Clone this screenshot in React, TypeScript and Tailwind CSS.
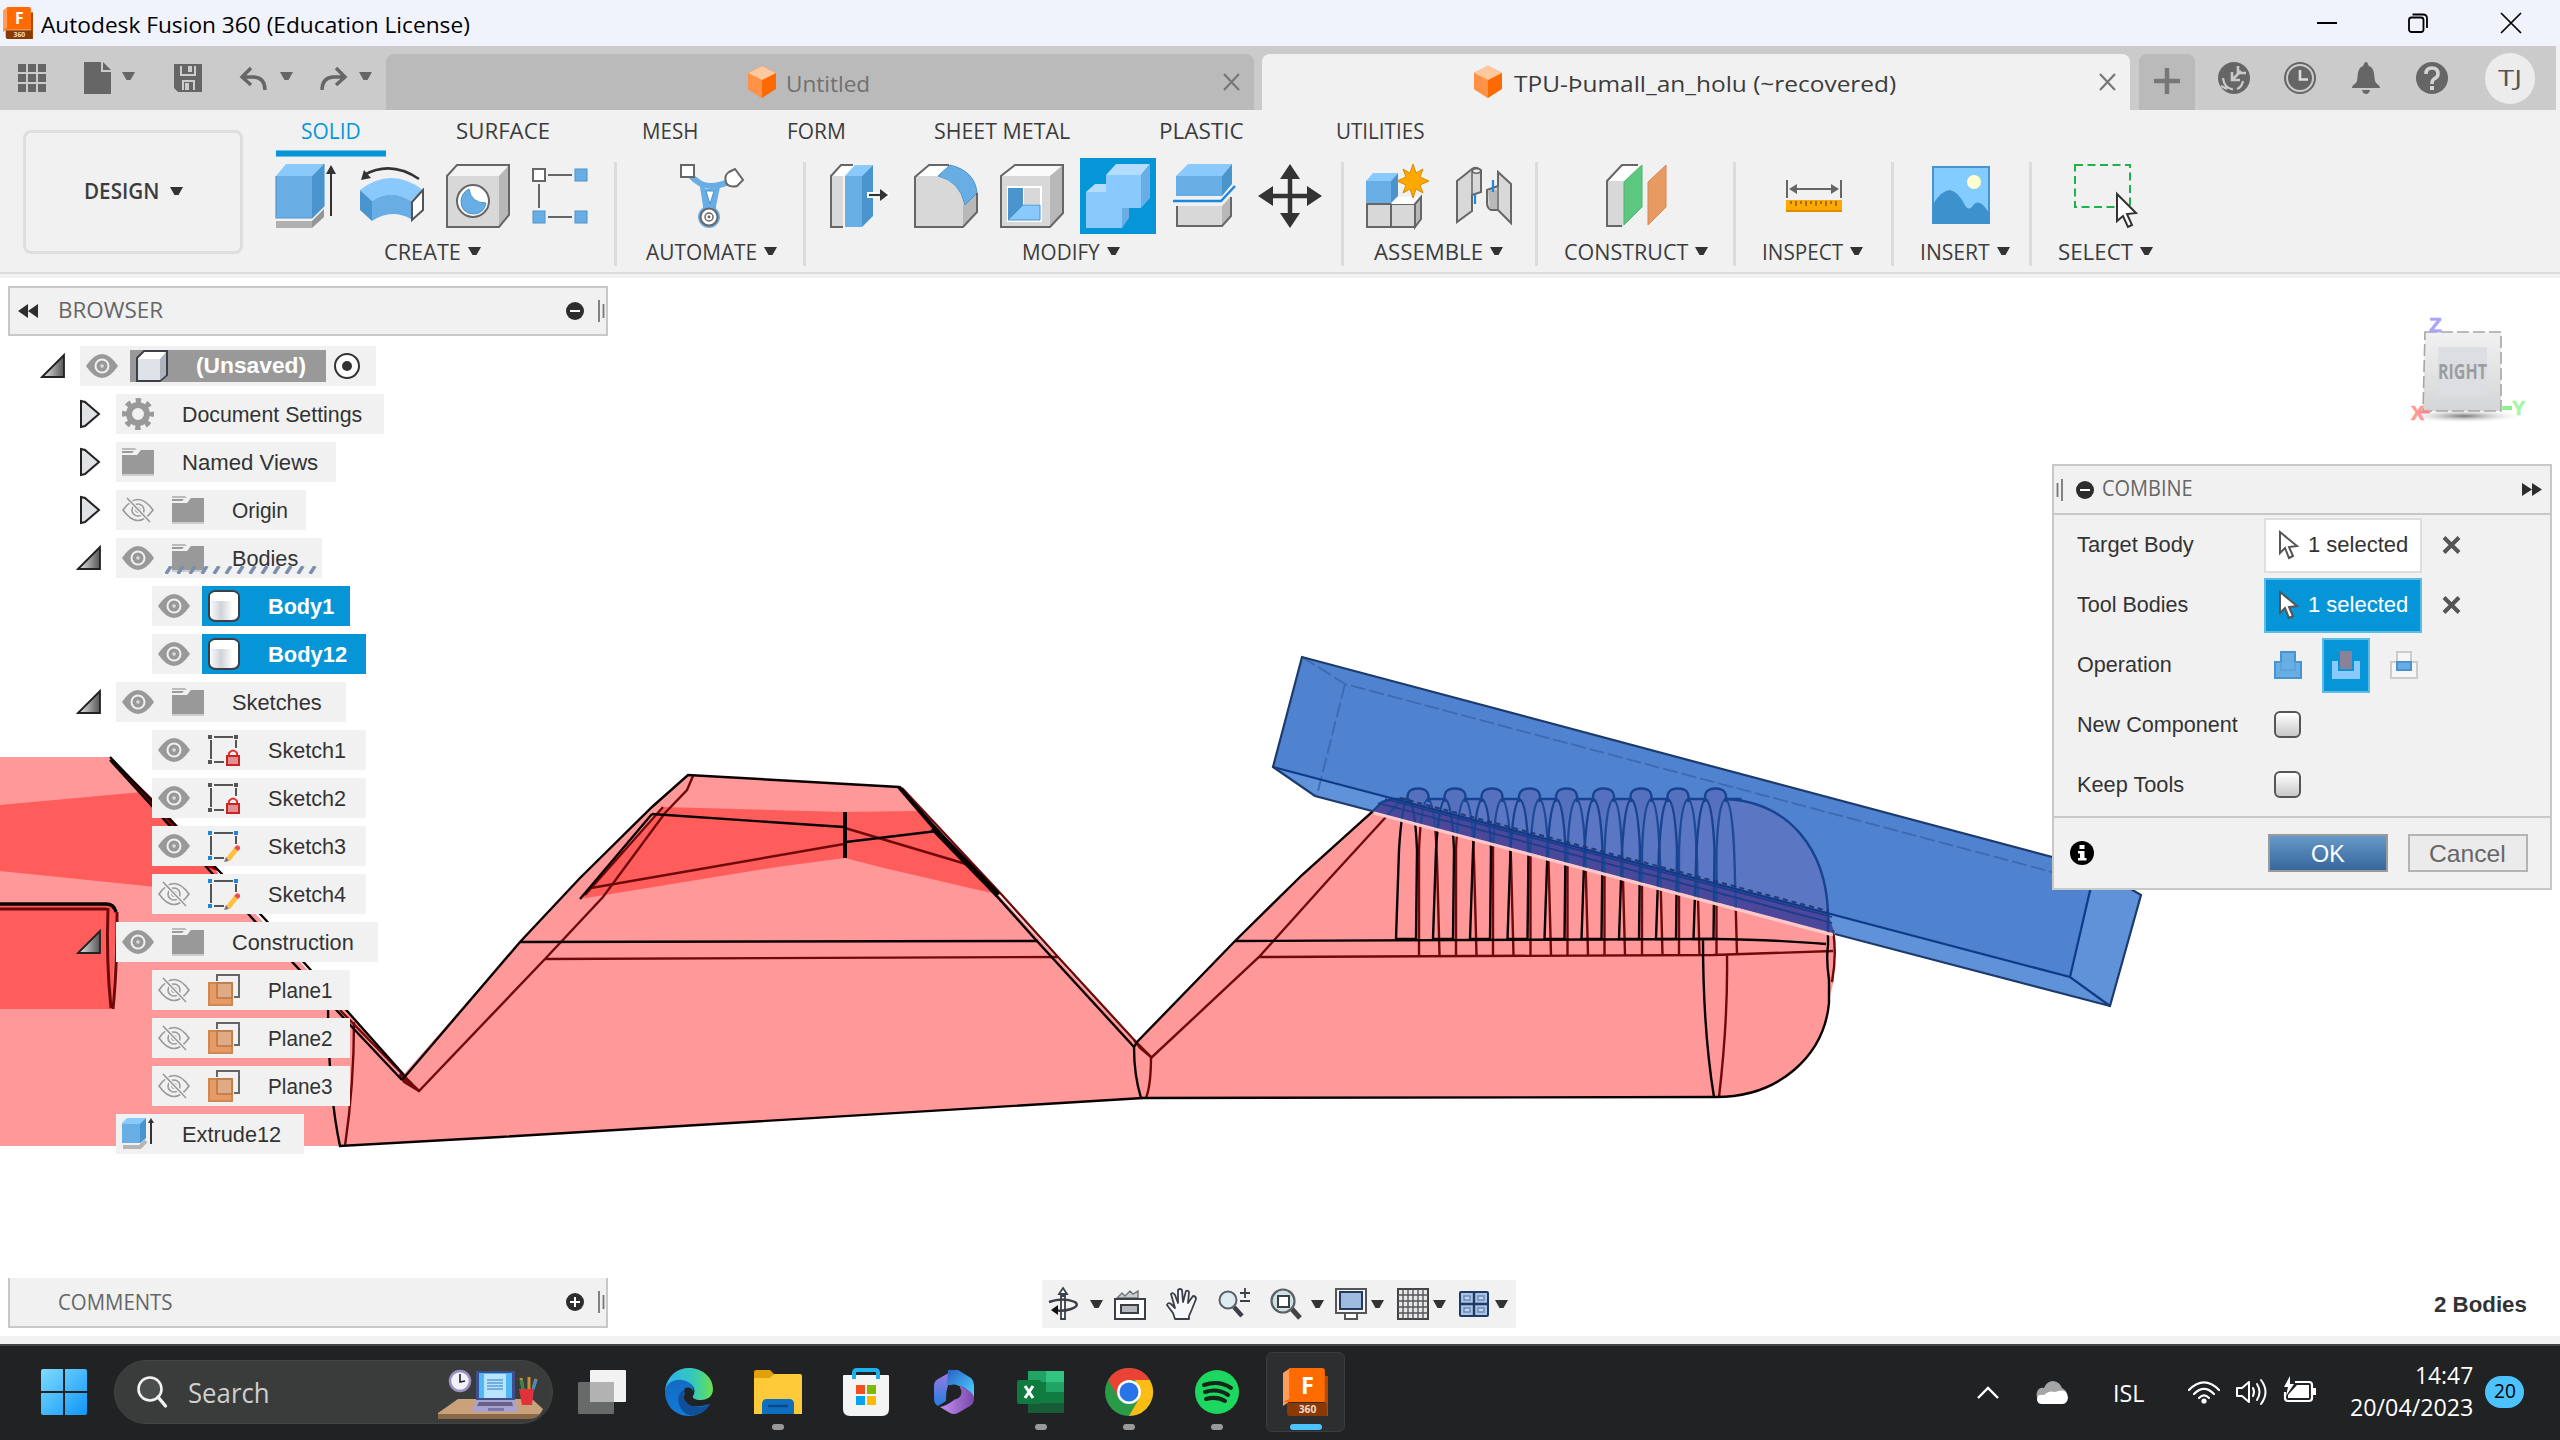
import React, { useLayoutEffect, useRef, useState, ReactNode } from 'react';

/* A single-line label set to an exact width by condensing or widening its glyphs. */
function Fit({ w, className = '', children }: { w: number; className?: string; children: ReactNode }) {
  const ref = useRef<HTMLSpanElement>(null);
  const [k, setK] = useState(1);
  useLayoutEffect(() => {
    if (ref.current) setK(w / ref.current.offsetWidth);
  }, [w]);
  return (
    <span className={'block shrink-0 whitespace-nowrap ' + className} style={{ width: w }}>
      <span ref={ref} className="inline-block origin-left" style={{ transform: `scaleX(${k})` }}>
        {children}
      </span>
    </span>
  );
}

function Caret({ className = '', color = '#333' }: { className?: string; color?: string }) {
  return (
    <svg className={'shrink-0 ' + className} width="13" height="9" viewBox="0 0 13 9">
      <path d="M0 0H13L8.500 8H4.500Z" fill={color} />
    </svg>
  );
}

function Ico({ vb, className = '', children }: { vb: string; className?: string; children: ReactNode }) {
  const p = vb.split(' ');
  return (
    <svg className={'block shrink-0 overflow-visible ' + className} width={p[2]} height={p[3]} viewBox={vb}>
      {children}
    </svg>
  );
}

const SEGOE = 'font-["Open_Sans","Noto_Sans",sans-serif]';

/* ---------- title bar ---------- */
function FusionLogo({ w, h }: { w: number; h: number }) {
  return (
    <svg className="block shrink-0" width={w} height={h} viewBox="0 0 44 48" preserveAspectRatio="none">
      <path d="M0 5L7 0V33L0 38Z" fill="#ff9d5c" />
      <path d="M6 0H38Q41 0 41 3V34H0L6 31Z" fill="#ff6b00" />
      <path d="M41 8H44V48H41Z" fill="#b34a00" />
      <path d="M4 35H43V48H7Q4 48 4 45Z" fill="#8a3a00" />
      <text x="24" y="26" fontSize="23" fontWeight="700" fill="#fff" textAnchor="middle" fontFamily="Open Sans, sans-serif">F</text>
      <text x="24" y="45" fontSize="10" fontWeight="700" fill="#f5dccb" textAnchor="middle" fontFamily="Open Sans, sans-serif">360</text>
    </svg>
  );
}

function TitleBar() {
  return (
    <div className="flex h-[46px] shrink-0 items-center bg-[#f0f3fb] text-black">
      <div className="ml-[3px]"><FusionLogo w={30} h={32} /></div>
      <Fit w={429} className={SEGOE + ' ml-2 mt-px text-[22px] leading-none'}>Autodesk Fusion 360 (Education License)</Fit>
      <Ico vb="0 0 20 20" className="ml-auto"><path d="M0 10H20" stroke="#000" strokeWidth="2" /></Ico>
      <Ico vb="0 0 20 20" className="ml-[71px]">
        <rect x="1" y="4.500" width="14.500" height="14.500" rx="2.500" fill="none" stroke="#000" strokeWidth="1.800" />
        <path d="M4.500 1.500H15Q19 1.500 19 5.500V15" fill="none" stroke="#000" strokeWidth="1.800" />
      </Ico>
      <Ico vb="0 0 20 20" className="ml-[73px] mr-[39px]"><path d="M0 0L20 20M20 0L0 20" stroke="#000" strokeWidth="1.700" /></Ico>
    </div>
  );
}

/* ---------- document tabs ---------- */
const DocCube = () => (
  <Ico vb="0 0 28 32">
    <path d="M14 0L28 7V23L14 32L0 23V7Z" fill="#ff6a00" />
    <path d="M0 7L14 14V32L0 23Z" fill="#ff9246" />
    <path d="M14 0L28 7L14 14L0 7Z" fill="#ffc9a0" />
  </Ico>
);
const CloseX = ({ className = '', color = '#777' }) => (
  <Ico vb="0 0 17 16" className={className}><path d="M1 0L16 16M16 0L1 16" stroke={color} strokeWidth="2.200" /></Ico>
);

function TabBar() {
  return (
    <div className="flex h-16 w-[2556px] shrink-0 bg-[#cbcbcb]">
      <div className="flex h-16 w-[386px] shrink-0 items-center pl-[18px]">
        <Ico vb="0 0 28 28">
          {[0, 10, 20].map((y) => [0, 10, 20].map((x) => <rect key={x + '-' + y} x={x} y={y} width="8" height="8" fill="#666" />))}
        </Ico>
        <Ico vb="0 0 27 32" className="ml-[38px]"><path d="M0 0H17V10H27V32H0Z" fill="#666" /><path d="M19 0L27 8H19Z" fill="#666" /></Ico>
        <Caret className="ml-[11px] -mt-[3px]" color="#666" />
        <Ico vb="0 0 28 28" className="ml-[39px]">
          <path d="M0 0H28V28H4L0 24Z" fill="#666" /><path d="M7 2V11H21V2M9 26V17H20V26" fill="none" stroke="#ccc" strokeWidth="2" /><rect x="14" y="2" width="4" height="6" fill="#ccc" /><rect x="11" y="19" width="4" height="7" fill="#ccc" />
        </Ico>
        <Ico vb="0 0 28 24" className="ml-[38px]"><path d="M2 11H14Q25 12 25 24M11 2L2 11L11 19" fill="none" stroke="#666" strokeWidth="3.400" /></Ico>
        <Caret className="ml-[12px] -mt-[3px]" color="#666" />
        <Ico vb="0 0 28 24" className="ml-[26px]"><path d="M26 11H14Q3 12 3 24M17 2L26 11L17 19" fill="none" stroke="#666" strokeWidth="3.400" /></Ico>
        <Caret className="ml-[12px] -mt-[3px]" color="#666" />
      </div>
      <div className="mt-2 flex h-14 w-[868px] shrink-0 items-center rounded-t-lg bg-[#bababa] pl-[362px]">
        <DocCube />
        <Fit w={84} className={SEGOE + ' ml-[10px] mt-0.5 text-[22px] leading-none text-[#707070]'}>Untitled</Fit>
        <CloseX className="ml-auto mr-[14px]" />
      </div>
      <div className="ml-2 mt-2 flex h-14 w-[868px] shrink-0 items-center rounded-t-lg bg-[#f1f1f1] pl-[212px]">
        <DocCube />
        <Fit w={382} className={SEGOE + ' ml-[12px] mt-0.5 text-[22px] leading-none text-[#3c3c3c]'}>TPU-Þumall_an_holu (~recovered)</Fit>
        <CloseX className="ml-auto mr-[14px]" />
      </div>
      <div className="ml-[9px] mt-2 flex h-14 w-14 shrink-0 items-center justify-center rounded-t-lg bg-[#bababa]">
        <Ico vb="0 0 26 26" className="-mt-0.5"><path d="M13 0V26M0 13H26" stroke="#777" strokeWidth="4.500" /></Ico>
      </div>
      <div className="flex h-16 items-center">
        <Ico vb="0 0 32 32" className="ml-[23px]">
          <circle cx="16" cy="16" r="16" fill="#666" />
          <path d="M14 18L23 9M14 10V18H22M20 4V11H28" fill="none" stroke="#cbcbcb" strokeWidth="2.600" />
          <path d="M5 16Q6 26 15 27.500M3 24L9 27M25 19Q24 25 19 27" fill="none" stroke="#cbcbcb" strokeWidth="2.200" />
        </Ico>
        <Ico vb="0 0 32 32" className="ml-[34px]">
          <circle cx="16" cy="16" r="15" fill="none" stroke="#666" strokeWidth="2" /><circle cx="16" cy="16" r="12" fill="#666" />
          <path d="M16 8V17.500H24" fill="none" stroke="#ddd" strokeWidth="2.600" />
        </Ico>
        <Ico vb="0 0 28 32" className="ml-[36px]">
          <path d="M14 0C16 0 16 3 17 4C23 6 22 14 23 19C24 22 28 23 28 26H0C0 23 4 22 5 19C6 14 5 6 11 4C12 3 12 0 14 0Z" fill="#666" /><path d="M10 28H18Q17 32 14 32T10 28Z" fill="#666" />
        </Ico>
        <Ico vb="0 0 32 32" className="ml-[36px]">
          <circle cx="16" cy="16" r="16" fill="#666" /><path d="M10 12Q10 6 16 6T22 12Q22 15 18 17Q16 18 16 22" fill="none" stroke="#d4d4d4" strokeWidth="3.600" /><rect x="14" y="24" width="4" height="4" fill="#d4d4d4" />
        </Ico>
        <div className={SEGOE + ' ml-[37px] flex h-[51px] w-[50px] items-center justify-center rounded-full bg-[#ececec] pb-0.5 text-[22px] leading-none text-[#555]'}>
          <Fit w={24}>TJ</Fit>
        </div>
      </div>
    </div>
  );
}

/* ---------- ribbon ---------- */
const B1 = '#68aee5', B2 = '#8ac9fb', B3 = '#4a94cd', G1 = '#d8d8d8', G2 = '#b8b8b8', GL = '#666';

const Extrude = () => (
  <Ico vb="276 158 64 76">
    <path d="M276 176H312V218H276Z" fill={B1} /><path d="M276 176L286 164H324L312 176Z" fill={B2} /><path d="M312 176L324 164V206L312 218Z" fill={B3} />
    <path d="M276 176V218H312L324 206V164" fill="none" stroke="#5497cc" strokeWidth="1.200" />
    <path d="M276 221H312V228H276Z" fill="#b0b0b0" /><path d="M312 221L324 209V217L312 228Z" fill="#969696" />
    <path d="M331 216V172" stroke="#333" strokeWidth="2" /><path d="M326 174L331 165L336 174Z" fill="#333" />
  </Ico>
);
const Revolve = () => (
  <Ico vb="361 158 64 76">
    <path d="M360 190Q391 166 423 190L411 201Q391 188 372 201Z" fill={B2} />
    <path d="M372 201Q391 188 411 201V219Q391 208 372 221Z" fill={B1} /><path d="M360 190L372 201V221L360 210Z" fill={B3} />
    <path d="M423 190L412 202V220L423 210Z" fill="#fff" stroke="#555" strokeWidth="2" />
    <path d="M364 175Q391 160 419 179" fill="none" stroke="#333" strokeWidth="2.500" /><path d="M361 180L364 170L371 178Z" fill="#333" />
  </Ico>
);
const Hole = () => (
  <Ico vb="446 158 64 76">
    <path d="M447 176H499V227H447Z" fill={G1} /><path d="M447 176L457 165H509L499 176Z" fill="#f4f4f4" /><path d="M499 176L509 165V215L499 227Z" fill={G2} />
    <path d="M447 227V176L457 165H509V215L499 227Z" fill="none" stroke={GL} strokeWidth="2" />
    <circle cx="473" cy="201" r="16" fill="#fff" stroke={GL} strokeWidth="2" /><path d="M469 189Q471 203 486 203Q484 214 473 214Q461 213 461 201Q462 192 469 189Z" fill={B1} stroke={B3} />
  </Ico>
);
const Sketch = () => (
  <Ico vb="531 158 64 76">
    <path d="M548 175H572M539 184V208M548 217H572" stroke={GL} strokeWidth="2" />
    <rect x="533" y="169" width="12" height="12" fill="#fff" stroke={GL} strokeWidth="2" />
    <rect x="575" y="169" width="12" height="12" fill={B1} stroke={B3} /><rect x="533" y="211" width="12" height="12" fill={B1} stroke={B3} /><rect x="575" y="211" width="12" height="12" fill={B1} stroke={B3} />
  </Ico>
);
const Automate = () => (
  <Ico vb="680 158 64 76">
    <path d="M690 175Q700 186 710 186Q720 186 731 181" fill="none" stroke={B1} strokeWidth="6" />
    <path d="M701 187L704 206V217H715V206L719 187L713 190H706Z" fill={B1} stroke={B1} strokeWidth="2" strokeLinejoin="round" />
    <path d="M706 191H714L710 204Z" fill="#fff" stroke={B3} />
    <circle cx="709" cy="217" r="11" fill={B1} />
    <rect x="681" y="165" width="13" height="12" fill="#fff" stroke={GL} strokeWidth="2" />
    <path d="M735 169L743 180L737 186Q728 188 726 182Q724 175 729 172Z" fill="#fff" stroke={GL} strokeWidth="2" />
    <circle cx="709" cy="217" r="8.500" fill="#fff" stroke={GL} strokeWidth="2" /><circle cx="709" cy="217" r="4" fill="none" stroke={GL} strokeWidth="1.500" /><circle cx="709" cy="217" r="1.400" fill={GL} />
  </Ico>
);
const PressPull = () => (
  <Ico vb="828 158 64 76">
    <path d="M843 227H831V176L841 165H852L843 176Z" fill={G1} /><path d="M832 176L841 165H854L844 176Z" fill="#fff" /><path d="M843 227H831V176L841 165H853" fill="none" stroke={GL} strokeWidth="2" />
    <path d="M845 176H862V227H845Z" fill={B1} /><path d="M845 176L855 165H873L862 176Z" fill={B2} /><path d="M862 176L873 165V216L862 227Z" fill={B3} />
    <path d="M867 195H889" stroke="#fff" strokeWidth="6" /><path d="M869 195H882" stroke="#333" strokeWidth="2.200" /><path d="M880 189L888 195L880 201Z" fill="#333" />
  </Ico>
);
const Fillet = () => (
  <Ico vb="914 158 64 76">
    <path d="M915 227V176L929 165H947L938 176Q962 182 965 207L977 193V211L963 227Z" fill={G1} />
    <path d="M916 176L929 165H949L939 176Z" fill="#fff" /><path d="M963 227V205L977 193V212Z" fill={G2} />
    <path d="M950 165Q975 171 977 193L965 205Q960 181 938 176Z" fill={B1} stroke={B3} />
    <path d="M949 165H929L915 177V227H963L977 212V193" fill="none" stroke={GL} strokeWidth="2" />
  </Ico>
);
const Shell = () => (
  <Ico vb="1000 158 64 76">
    <path d="M1001 176H1050V227H1001Z" fill={G1} /><path d="M1001 176L1015 165H1063L1050 176Z" fill="#fafafa" /><path d="M1050 176L1063 165V213L1050 227Z" fill={G2} />
    <path d="M1001 227V176L1015 165H1063V213L1050 227Z" fill="none" stroke={GL} strokeWidth="2" />
    <rect x="1007" y="186" width="35" height="36" fill="#fff" /><path d="M1008 188H1023V205L1008 220Z" fill={B3} /><path d="M1008 220L1023 205H1040V220Z" fill={B2} stroke={B3} /><rect x="1024" y="188" width="16" height="16" fill={G1} />
  </Ico>
);
const Combine = () => (
  <Ico vb="1086 158 64 76">
    <rect x="1080" y="158" width="76" height="76" fill="#0696d7" />
    <path d="M1086 192H1106V175H1141V208H1122V228H1086Z" fill={B2} />
    <path d="M1086 192L1095 184H1106V192ZM1106 175L1116 164H1150L1141 175Z" fill="#b4dcff" /><path d="M1141 175L1150 164V198L1141 208ZM1122 228L1129 218V208H1122Z" fill={B1} />
  </Ico>
);
const Split = () => (
  <Ico vb="1172 158 64 76">
    <path d="M1176 176H1222V196H1176Z" fill={B1} /><path d="M1176 176L1188 164H1232L1222 176Z" fill={B2} /><path d="M1222 176L1232 164V184L1222 196Z" fill={B3} />
    <path d="M1173 201H1221L1235 186" fill="none" stroke="#1b87e0" strokeWidth="2.500" />
    <path d="M1177 206H1222V226H1177Z" fill={G1} /><path d="M1222 206L1231 196V216L1222 226Z" fill={G2} /><path d="M1177 206V226H1222L1231 216V197" fill="none" stroke={GL} strokeWidth="2" />
  </Ico>
);
const Move = () => (
  <Ico vb="1258 158 64 76">
    <path d="M1290 172V220M1268 196H1312" stroke="#333" strokeWidth="4.500" />
    <path d="M1290 164L1300 179H1280ZM1290 228L1300 213H1280ZM1258 196L1273 186V206ZM1322 196L1307 186V206Z" fill="#333" />
  </Ico>
);
const NewComp = () => (
  <Ico vb="1366 158 64 76">
    <path d="M1366 181H1391V203H1366Z" fill={B1} /><path d="M1366 181L1373 173H1398L1391 181Z" fill={B2} /><path d="M1391 181L1398 173V196L1391 203Z" fill={B3} />
    <path d="M1367 204H1391V227H1367ZM1391 204H1415V227H1391Z" fill={G1} stroke={GL} strokeWidth="2" /><path d="M1391 204L1398 197H1421L1415 204Z" fill="#fff" /><path d="M1415 204L1421 197V219L1415 227Z" fill={G2} stroke={GL} strokeWidth="2" />
    <path d="M1413 164L1416 173L1423 169L1420 177L1429 181L1420 185L1423 193L1416 189L1413 198L1410 189L1403 193L1406 185L1397 181L1406 177L1403 169L1410 173Z" fill="#ffa800" stroke="#d98c00" />
  </Ico>
);
const Joint = () => (
  <Ico vb="1456 158 64 76">
    <path d="M1457 181L1472 169Q1475 166 1481 170V192L1472 195V211L1457 222Z" fill={G1} stroke={GL} strokeWidth="2" />
    <path d="M1472 171V195" stroke={GL} strokeWidth="1.500" /><ellipse cx="1476.500" cy="171" rx="4" ry="2.200" fill="#eee" stroke={GL} strokeWidth="1.500" />
    <path d="M1498 172L1511 184V223L1498 210H1491Q1487 208 1487 203V190L1498 186Z" fill={G1} stroke={GL} strokeWidth="2" />
    <path d="M1498 186V210" stroke={GL} strokeWidth="1.500" /><path d="M1488 190H1497V209H1490Z" fill={G2} />
    <path d="M1475 194V204M1493 180V192" stroke="#1b87e0" strokeWidth="2.200" />
  </Ico>
);
const Construct = () => (
  <Ico vb="1606 158 64 76">
    <path d="M1624 226H1607V181L1622 165H1640L1624 182Z" fill={G1} /><path d="M1608 181L1622 165H1640L1624 181Z" fill="#fff" /><path d="M1622 226H1607V181L1622 165H1638" fill="none" stroke={GL} strokeWidth="2" />
    <path d="M1624 182L1642 165V207L1624 225Z" fill="#5bc77f" stroke="#45b96c" /><path d="M1648 182L1666 165V207L1648 225Z" fill="#e79a62" stroke="#d5874e" />
  </Ico>
);
const Inspect = () => (
  <Ico vb="1784 158 64 76">
    <path d="M1787 180V198M1841 180V198M1793 189H1836" stroke={GL} strokeWidth="2" /><path d="M1789 189L1797 184V194ZM1839 189L1831 184V194Z" fill={GL} />
    <rect x="1786" y="200" width="56" height="12" fill="#ffa800" /><path d="M1786 211H1842" stroke="#dc8d00" strokeWidth="2" />
    <path d="M1791 201V204M1796 201V206M1801 201V204M1806 201V206M1811 201V204M1816 201V206M1821 201V204M1826 201V206M1831 201V204M1836 201V206" stroke="#7a5a1a" strokeWidth="1.400" />
  </Ico>
);
const Insert = () => (
  <Ico vb="1929 158 64 76">
    <rect x="1933" y="167" width="56" height="56" fill="#83ccff" stroke={B3} strokeWidth="2" /><circle cx="1974" cy="182" r="7" fill="#ffffd0" />
    <path d="M1933 204Q1942 190 1950 190Q1959 192 1966 207Q1970 211 1974 204Q1979 200 1984 206L1990 214V224H1932Z" fill="#3d92cd" />
  </Ico>
);
const Select = () => (
  <Ico vb="2074 158 64 76">
    <rect x="2075" y="165" width="55" height="42" fill="none" stroke="#1eb24c" strokeWidth="2" strokeDasharray="8 4.500" />
    <path d="M2117 194V221L2123 216L2128 227L2132 225L2127 214L2136 213Z" fill="#fff" stroke="#333" strokeWidth="2" />
  </Ico>
);

function RibbonTab({ label, w, className }: { label: string; w: number; className: string }) {
  return <Fit w={w} className={'h-10 pt-px leading-[38px] ' + className}>{label}</Fit>;
}

function Group({ cls, iconCls, labelCls, label, w, last, children }: { cls: string; iconCls: string; labelCls: string; label: string; w: number; last?: boolean; children: ReactNode }) {
  return (
    <>
      <div className={'shrink-0 ' + cls}>
        <div className={'flex h-[76px] ' + iconCls}>{children}</div>
        <div className={'mt-[3px] flex h-7 items-center leading-none ' + labelCls}>
          <Fit w={w}>{label}</Fit>
          <Caret className="ml-[7px]" />
        </div>
      </div>
      {!last && <div className="mt-1 h-[104px] w-[3px] shrink-0 bg-[#dcdcdc]" />}
    </>
  );
}

function Ribbon() {
  return (
    <div className={SEGOE + ' flex h-[164px] shrink-0 border-b-2 border-[#dcdcdc] bg-[#f1f1f1] text-[22px] text-[#3c3c3c]'}>
      <div className="ml-[23px] mt-5 flex h-[124px] w-[220px] shrink-0 items-center justify-center rounded-lg border-[3px] border-[#dedede] pb-[5px] font-semibold leading-none">
        <Fit w={75}>DESIGN</Fit>
        <Caret className="ml-[11px] mt-1" />
      </div>
      <div className="flex flex-col">
        <div className="flex h-12">
          <div className="ml-[33px] w-[110px] shrink-0 text-[#0696d7]">
            <Fit w={60} className="ml-[25px] h-10 pt-px leading-[38px]">SOLID</Fit>
            <div className="h-[7px] border-y border-[#6cc0e8] bg-[#0696d7]" />
          </div>
          <RibbonTab label="SURFACE" w={94} className="ml-[70px]" />
          <RibbonTab label="MESH" w={56} className="ml-[92px]" />
          <RibbonTab label="FORM" w={59} className="ml-[89px]" />
          <RibbonTab label="SHEET METAL" w={136} className="ml-[88px]" />
          <RibbonTab label="PLASTIC" w={85} className="ml-[89px]" />
          <RibbonTab label="UTILITIES" w={88} className="ml-[92px]" />
        </div>
        <div className="flex">
          <Group cls="w-[371px]" iconCls="pl-[33px] gap-[21px]" labelCls="pl-[141px]" label="CREATE" w={77}><Extrude /><Revolve /><Hole /><Sketch /></Group>
          <Group cls="w-[186px]" iconCls="pl-[63px]" labelCls="pl-[29px]" label="AUTOMATE" w={111}><Automate /></Group>
          <Group cls="w-[535px]" iconCls="pl-[22px] gap-[22px]" labelCls="pl-[216px]" label="MODIFY" w={78}><PressPull /><Fillet /><Shell /><Combine /><Split /><Move /></Group>
          <Group cls="w-[191px]" iconCls="pl-[22px] gap-[26px]" labelCls="pl-[30px]" label="ASSEMBLE" w={109}><NewComp /><Joint /></Group>
          <Group cls="w-[195px]" iconCls="pl-[68px]" labelCls="pl-[26px]" label="CONSTRUCT" w={124}><Construct /></Group>
          <Group cls="w-[155px]" iconCls="pl-[48px]" labelCls="pl-[26px]" label="INSPECT" w={81}><Inspect /></Group>
          <Group cls="w-[135px]" iconCls="pl-[35px]" labelCls="pl-[26px]" label="INSERT" w={70}><Insert /></Group>
          <Group cls="w-[140px]" iconCls="pl-[42px]" labelCls="pl-[26px]" label="SELECT" w={75} last><Select /></Group>
        </div>
      </div>
    </div>
  );
}

/* ---------- 3D model ---------- */
const RIBS = [1418, 1455, 1492, 1529.5, 1566.5, 1603.5, 1641, 1678, 1715.5];
const BOX = 'M1302 657L2097 869L2141 895L2110 1006L1315 796L1273 767Z';
const RIGHT_BODY = 'M1137 1042L1235 941L1302 875L1371 813L1382 802L1392 799H1727C1790 803 1826 850 1828 913L1834 932V980L1829 1000C1824 1055 1780 1097 1716 1097L1142 1098L1134 1047Z';

function RightEdges({ front, back }: { front: string; back: string }) {
  return (
    <g fill="none" strokeWidth="2.400">
      <g stroke={back}>
        <path d="M1151 1058L1259 957L1330 878L1385 818L1402 799M1259 957L1713 955L1833 951" />
        <path d="M1151 1057Q1151 1085 1146 1098M1727 955Q1728 1020 1719 1097M1833 930Q1837 955 1832 982" />
        {RIBS.map((c) => <path key={c} d={`M${c + 1} 955V850Q${c + 3} 802 ${c + 10} 799Q${c + 17} 802 ${c + 19} 860L${c + 21.500} 955`} />)}
      </g>
      <g stroke={front}>
        <path d="M1134 1047L1137 1042L1235 941L1302 875L1371 813L1382 802L1392 799H1408M1727 799C1790 803 1826 850 1828 913V945Q1826 960 1829 980V1003C1824 1055 1780 1097 1716 1097L1142 1098" />
        <path d="M1235 941L1713 939Q1780 940 1826 944M1703 940Q1703 1030 1714 1097" />
        {RIBS.map((c) => <path key={c} d={`M${c - 22} 939L${c - 19} 850Q${c - 16} 802 ${c - 10} 799Q${c - 3} 802 ${c - 1} 850L${c - 2} 939Z`} />)}
        {RIBS.map((c) => <path key={'c' + c} d={`M${c - 10} 802Q${c - 13} 788.500 ${c} 788.500Q${c + 13} 788.500 ${c + 10} 802M${c + 11} 799H${c + 26}`} />)}
      </g>
    </g>
  );
}

function Model() {
  const K = '#0a0000', R = '#700a0a';
  return (
    <svg className="absolute inset-0" width="2560" height="1062" viewBox="0 274 2560 1062">
      <defs>
        <clipPath id="inBox"><path d={BOX} /></clipPath>
        <clipPath id="inBody"><path d={RIGHT_BODY} /></clipPath>
      </defs>
      <path d="M0 757H110L404 1074L520 942L580 878L652 807L688 775L899 787L1136 1044L1143 1098L340 1146H0Z" fill="#ff9999" />
      <path d={RIGHT_BODY} fill="#ff9999" />
      <path d="M0 805L142 792L218 873L205 892L0 871Z" fill="#ff5c5c" />
      <path d="M0 905H108Q116 906 116 918L112 1009H0Z" fill="#ff5c5c" />
      <path d="M663 807L844 812L917 811L1000 895L884 868L845 858L777 867L580 899Z" fill="#ff5c5c" />
      <path d="M110 757L152 798L222 873L205 866L150 805Z" fill="#8a0000" />
      <g fill="none" strokeWidth="2.400">
        <g stroke={R}>
          <path d="M0 909H107M108 908Q106 960 111 1008M117 912Q117 970 113 1009" strokeWidth="3" />
          <path d="M340 1010L419 1091L545 959L603 897L665 813L687 790L693 776M545 959L1058 957" />
          <path d="M354 1022Q354 1085 345 1146M591 888L844 844M845 828L966 864M585 895L663 807" />
          <path d="M902 788L1002 895L1058 957L1136 1042L1151 1057" />
        </g>
        <path d="M1134 1040L1151 1057L1140 1048ZM400 1074L419 1091L404 1082Z" fill="#b00000" stroke={R} />
        <g stroke={K}>
          <path d="M0 904H106Q114 904 116 912" strokeWidth="3.500" />
          <path d="M110 757L264 918L308 967L404 1075M110 760L152 806L252 918L352 1027L402 1080M328 1000Q328 1090 340 1146L500 1137L1143 1098" />
          <path d="M402 1080L520 942L580 878L652 807L688 775L899 787L1036 940L1134 1047Q1134 1075 1141 1098" />
          <path d="M520 942L1038 941M652 814L844 827M580 899L652 814M846 842L937 831" />
          <path d="M845 812V858" strokeWidth="4" />
          <path d="M899 787L935 829" strokeWidth="4" />
          <path d="M933 828L998 895" strokeWidth="6" />
        </g>
      </g>
      <RightEdges front={K} back={R} />

      <path d={BOX} fill="#5f92d9" />
      <path d="M1302 657L2097 869L2070 977L1273 767Z" fill="#5083cf" />
      <g clipPath="url(#inBox)">
        <path d={RIGHT_BODY} fill="#5b76c2" />
        {RIBS.map((c) => <path key={c} d={`M${c - 11} 799Q${c - 12} 788 ${c} 788Q${c + 12} 788 ${c + 11} 799Q${c + 2} 805 ${c} 830Q${c - 2} 805 ${c - 11} 799Z`} fill="#5670c0" />)}
        <g clipPath="url(#inBody)">
          <path d="M1371 800L1395 799L1840 916V936L1365 811Z" fill="#4b479b" />
        </g>
        <RightEdges front="#17438f" back="#1f4a98" />
        <path d="M1378 803L1832 923M1385 799L1832 917" stroke="#1a3d8c" strokeWidth="1.800" fill="none" />
        <path d="M1400 798L1828 911" stroke="#26386f" strokeWidth="2" strokeDasharray="5 4" fill="none" />
      </g>
      <path d="M1374 813L1833 935" stroke="#ffc9cc" strokeWidth="3" />
      <path d="M1302 657L1345 684L2052 872L2092 880M1345 684L1317 795" fill="none" stroke="#3c69b3" strokeWidth="1.800" strokeDasharray="15 4" />
      <path d="M1273 767L2070 977L2110 1006M2070 977L2095 869" fill="none" stroke="#0e3b88" strokeWidth="2.200" />
      <path d="M1372 811L1315 796L1273 767L1302 657L2097 869L2141 895L2110 1006L1835 934" fill="none" stroke="#1d3a6c" strokeWidth="2.200" />
    </svg>
  );
}

/* ---------- browser tree ---------- */
const Eye = () => (
  <Ico vb="0 0 32 24"><path d="M0 12Q16 -12 32 12Q16 36 0 12Z" fill="#999" /><circle cx="16" cy="12" r="7.500" fill="#f1f1f1" /><circle cx="16" cy="12" r="5.500" fill="#999" /><circle cx="16" cy="12" r="1.800" fill="#ddd" /></Ico>
);
const EyeOff = () => (
  <Ico vb="0 0 32 24"><path d="M1 12Q16 -9 31 12Q16 33 1 12Z" fill="none" stroke="#999" strokeWidth="1.600" /><circle cx="16" cy="12" r="6" fill="none" stroke="#999" strokeWidth="1.600" /><circle cx="16" cy="12" r="2.500" fill="none" stroke="#999" /><path d="M5 0L28 24" stroke="#f1f1f1" strokeWidth="4" /><path d="M5 0L28 24" stroke="#999" strokeWidth="1.600" /></Ico>
);
const Folder = () => (
  <Ico vb="0 0 32 28"><path d="M0 0H13L15 2H0Z" fill="#bbb" /><path d="M0 3H12L10 5H0Z" fill="#999" /><path d="M0 7H15L19 2H32V26H0Z" fill="#999" /><path d="M0 27H32" stroke="#ccc" strokeWidth="2" /></Ico>
);
const Gear = () => (
  <Ico vb="0 0 32 32"><circle cx="16" cy="16" r="9" fill="none" stroke="#999" strokeWidth="6" /><circle cx="16" cy="16" r="13.500" fill="none" stroke="#999" strokeWidth="5" strokeDasharray="5.300 5.300" strokeDashoffset="2.650" /></Ico>
);
const RootCube = () => (
  <Ico vb="0 0 32 32"><path d="M1 8L8 1H31V25L24 31H1Z" fill="#fff" stroke="#3c3f48" strokeWidth="2" /><path d="M2 9H24V30H2Z" fill="#dfe2e8" /><path d="M24 9L30 2V25L24 30Z" fill="#aeb4be" /></Ico>
);
const BodyIcon = () => (
  <Ico vb="0 0 32 32">
    <defs><linearGradient id="cyl"><stop offset="0" stopColor="#fff" /><stop offset=".4" stopColor="#cfd3da" /><stop offset=".8" stopColor="#fff" /></linearGradient></defs>
    <path d="M1 6Q2 1 9 1H23Q30 1 31 6V26Q30 31 23 31H9Q2 31 1 26Z" fill="url(#cyl)" stroke="#3c3f48" strokeWidth="2" /><path d="M2 6Q3 2 9 2H23Q29 2 30 6Q30 11 23 11H9Q2 11 2 6Z" fill="#fff" />
  </Ico>
);
const SkIcon = ({ locked }: { locked: boolean }) => {
  const c = locked ? '#555' : '#1b87e0';
  return (
    <Ico vb="0 0 32 32">
      <path d="M6 3H25M3 6V25M28 6V14M6 28H16" stroke="#555" strokeWidth="2" />
      <path d="M0 1H4V5H0ZM26 1H30V5H26ZM0 26H4V30H0Z" fill={c} />
      {locked ? (
        <><path d="M21 22V19Q25 14 29 19V22" fill="none" stroke="#d33" strokeWidth="2" /><rect x="19" y="22" width="12" height="9" fill="#e09090" stroke="#cc2222" strokeWidth="2" /></>
      ) : (
        <><path d="M18 28L26 18L30 21L22 31Z" fill="#ffbf40" /><path d="M26 18L29 15Q33 16 32 19L30 21Z" fill="#f34a4a" /><path d="M18 27L21 31L16 32Z" fill="#777" /></>
      )}
    </Ico>
  );
};
const PlaneIcon = () => (
  <Ico vb="0 0 32 32"><path d="M1 9H24V31H1Z" fill="#e79a62" stroke="#d08850" strokeWidth="2" /><path d="M9 9H24V24H9Z" fill="#dfaa84" stroke="#b87848" strokeWidth="1.500" /><path d="M9 7V1H31V23H26" fill="none" stroke="#666" strokeWidth="2" /></Ico>
);
const ExtIcon = () => (
  <Ico vb="0 0 32 32"><path d="M0 5L5 0H24V20L19 25H0Z" fill={B2} /><path d="M0 6H18V25H0Z" fill={B1} /><path d="M18 6L24 0V20L18 25Z" fill={B3} /><path d="M1 29H18L24 23" fill="none" stroke="#b5b5b5" strokeWidth="4" /><path d="M29 26V4" stroke="#333" strokeWidth="2" /><path d="M26 5L29 0L32 5Z" fill="#333" /></Ico>
);
const Open = () => (
  <Ico vb="0 0 24 24">
    <defs><linearGradient id="tri" x1="0" y1="1" x2="1" y2="1"><stop offset="0" stopColor="#eee" /><stop offset="1" stopColor="#555" /></linearGradient></defs>
    <path d="M1 23L23 1V23Z" fill="url(#tri)" stroke="#222" strokeWidth="1.800" />
  </Ico>
);
const Closed = () => <Ico vb="0 0 20 28"><path d="M1 1L5 2L19 14L5 26L1 27Z" fill="#e0e2e6" stroke="#222" strokeWidth="2" /></Ico>;

function Row({ pad, exp, w, eye, icon, label, tw }: { pad: string; exp?: 'open' | 'closed'; w: string; eye?: 'on' | 'off'; icon: ReactNode; label: string; tw: number }) {
  return (
    <div className={'flex h-10 items-center ' + pad}>
      <div className="flex w-9 shrink-0 items-center">
        {exp === 'open' && <div className="-ml-[3px]"><Open /></div>}
        {exp === 'closed' && <Closed />}
      </div>
      <div className={'relative flex h-10 items-center bg-[#f1f1f1] pl-1.5 ' + w}>
        {eye && <div className="mr-[18px]">{eye === 'on' ? <Eye /> : <EyeOff />}</div>}
        {icon}
        <Fit w={tw} className="ml-[28px] mt-[3px]">{label}</Fit>
        {label === 'Bodies' && (
          <svg className="absolute bottom-[4px] left-[49px]" width="154" height="8" viewBox="0 0 154 8">
            {Array.from({ length: 13 }, (_, i) => <path key={i} d={`M${1 + i * 12} 8L${6 + i * 12} 0`} stroke="#7c8db0" strokeWidth="3.500" />)}
          </svg>
        )}
      </div>
    </div>
  );
}
function BodyRow({ label, w, tw }: { label: string; w: string; tw: number }) {
  return (
    <div className="flex h-10 items-center pl-[144px]">
      <div className="flex h-10 w-[50px] items-center bg-[#f1f1f1] pl-1.5"><Eye /></div>
      <div className={'flex h-10 items-center bg-[#0696d7] pl-1.5 font-bold text-white ' + w}>
        <BodyIcon />
        <Fit w={tw} className="ml-[28px] mt-[3px]">{label}</Fit>
      </div>
    </div>
  );
}

const Handles = ({ className = '', flip = false }) => (
  <Ico vb="0 0 7 22" className={className}><path d={flip ? 'M6 0V22M1.500 4V18' : 'M1 0V22M5.500 4V18'} stroke="#777" strokeWidth="1.800" /></Ico>
);
const Dot = ({ plus = false }) => (
  <Ico vb="0 0 18 18"><circle cx="9" cy="9" r="9" fill="#2d2d2d" /><path d={plus ? 'M4 9H14M9 4V14' : 'M4 9H14'} stroke="#fff" strokeWidth="2" /></Ico>
);

function Browser() {
  return (
    <div className='absolute left-2 top-3 w-[600px] font-["Liberation_Sans",Arial,sans-serif] text-[21.33px] leading-none text-[#333]'>
      <div className={SEGOE + ' flex h-[50px] items-center border-2 border-[#c8c8c8] bg-[#f1f1f1] text-[22px] text-[#666]'}>
        <Ico vb="0 0 20 14" className="ml-2"><path d="M0 7L10 0V14ZM10 7L20 0V14Z" fill="#2d2d2d" /></Ico>
        <Fit w={105} className="-mt-1 ml-5">BROWSER</Fit>
        <div className="ml-auto"><Dot /></div>
        <Handles className="ml-[14px] mr-[1px]" />
      </div>
      <div className="mt-[10px] flex flex-col gap-2">
        <div className="flex h-10 items-center pl-[33px]">
          <Open />
          <div className="ml-[15px] flex h-10 w-[296px] items-center bg-[#f1f1f1] pl-1.5">
            <Eye />
            <div className="ml-3 flex h-8 w-[196px] items-center bg-[#999] pl-1.5 font-bold text-white">
              <RootCube />
              <Fit w={110} className="ml-7 mt-0.5">(Unsaved)</Fit>
            </div>
            <Ico vb="0 0 26 26" className="ml-2"><circle cx="13" cy="13" r="12" fill="#fff" stroke="#333" strokeWidth="2" /><circle cx="13" cy="13" r="5" fill="#333" /></Ico>
          </div>
        </div>
        <Row pad="pl-[72px]" exp="closed" w="w-[268px]" icon={<Gear />} label="Document Settings" tw={180} />
        <Row pad="pl-[72px]" exp="closed" w="w-[220px]" icon={<Folder />} label="Named Views" tw={136} />
        <Row pad="pl-[72px]" exp="closed" w="w-[190px]" eye="off" icon={<Folder />} label="Origin" tw={56} />
        <Row pad="pl-[72px]" exp="open" w="w-[206px]" eye="on" icon={<Folder />} label="Bodies" tw={66} />
        <BodyRow label="Body1" w="w-[148px]" tw={66} />
        <BodyRow label="Body12" w="w-[164px]" tw={79} />
        <Row pad="pl-[72px]" exp="open" w="w-[230px]" eye="on" icon={<Folder />} label="Sketches" tw={90} />
        <Row pad="pl-[108px]" w="w-[214px]" eye="on" icon={<SkIcon locked />} label="Sketch1" tw={78} />
        <Row pad="pl-[108px]" w="w-[214px]" eye="on" icon={<SkIcon locked />} label="Sketch2" tw={78} />
        <Row pad="pl-[108px]" w="w-[214px]" eye="on" icon={<SkIcon locked={false} />} label="Sketch3" tw={78} />
        <Row pad="pl-[108px]" w="w-[214px]" eye="off" icon={<SkIcon locked={false} />} label="Sketch4" tw={78} />
        <Row pad="pl-[72px]" exp="open" w="w-[262px]" eye="on" icon={<Folder />} label="Construction" tw={122} />
        <Row pad="pl-[108px]" w="w-[198px]" eye="off" icon={<PlaneIcon />} label="Plane1" tw={64} />
        <Row pad="pl-[108px]" w="w-[198px]" eye="off" icon={<PlaneIcon />} label="Plane2" tw={64} />
        <Row pad="pl-[108px]" w="w-[198px]" eye="off" icon={<PlaneIcon />} label="Plane3" tw={64} />
        <Row pad="pl-[72px]" w="w-[188px]" icon={<ExtIcon />} label="Extrude12" tw={99} />
      </div>
    </div>
  );
}

/* ---------- combine dialog ---------- */
const Cursor = ({ fill }: { fill: string }) => (
  <Ico vb="0 0 20 30"><path d="M1 2V23L6 18L10 28L14 26L10 17L18 16Z" fill={fill} stroke="#555" strokeWidth="2" /></Ico>
);
function Field({ active = false }) {
  return (
    <>
      <div className={'flex h-[55px] w-[158px] shrink-0 items-center border-2 pl-[13px] ' + (active ? 'border-[#5cbce8] bg-[#0696d7] text-white' : 'border-[#dedede] bg-white')}>
        <Cursor fill="#fff" />
        <Fit w={100} className="ml-[9px] mt-px">1 selected</Fit>
      </div>
      <Ico vb="0 0 17 16" className="ml-[21px]"><path d="M1 0.500L16 15.500M16 0.500L1 15.500" stroke="#555" strokeWidth="4" /></Ico>
    </>
  );
}
const Check = () => <div className="ml-[10px] h-[27px] w-[27px] rounded-md border-2 border-[#555] bg-linear-to-b from-white to-[#c8c8c8]" />;

function DialogRow({ label, w, children }: { label: string; w: number; children: ReactNode }) {
  return (
    <div className="flex h-[60px] items-center pl-[23px]">
      <Fit w={w} className="mt-px">{label}</Fit>
      <div className="flex flex-1 items-center justify-start">{children}</div>
    </div>
  );
}
function CombineDialog() {
  return (
    <div className='absolute left-[2052px] top-[190px] h-[426px] w-[500px] border-2 border-[#c8c8c8] bg-[#f1f1f1] font-["Liberation_Sans",Arial,sans-serif] text-[21.33px] leading-none text-[#333]'>
      <div className={SEGOE + ' flex h-[49px] items-center border-b-2 border-[#c8c8c8] text-[21.5px] text-[#666]'}>
        <Handles flip className="ml-[2px]" />
        <div className="ml-[13px]"><Dot /></div>
        <Fit w={91} className="-mt-[3px] ml-2">COMBINE</Fit>
        <Ico vb="0 0 20 13" className="ml-auto mr-2"><path d="M0 0L10 6.500L0 13ZM10 0L20 6.500L10 13Z" fill="#2d2d2d" /></Ico>
      </div>
      <div className="h-[303px] border-b-2 border-[#c8c8c8]">
        <DialogRow label="Target Body" w={117}><div className="ml-[70px] flex items-center"><Field /></div></DialogRow>
        <DialogRow label="Tool Bodies" w={111}><div className="ml-[76px] flex items-center"><Field active /></div></DialogRow>
        <DialogRow label="Operation" w={95}>
          <Ico vb="0 0 28 28" className="ml-[102px]"><path d="M7 1H21V11H27V27H1V11H7Z" fill={B1} stroke={B3} strokeWidth="2" /><path d="M7 11V19H21V11" fill="none" stroke="#5aa0d8" strokeWidth="1.500" /></Ico>
          <div className="ml-5 flex h-[55px] w-12 items-center justify-center border-2 border-[#5cbce8] bg-[#0696d7]">
            <Ico vb="0 0 28 28"><path d="M0 10H28V28H0Z" fill={B2} /><path d="M6 8H22V20H6Z" fill="#0696d7" /><rect x="8" y="0" width="12" height="18" fill="#8c819b" /></Ico>
          </div>
          <Ico vb="0 0 28 28" className="ml-5"><path d="M7 1H21V11H27V27H1V11H7Z" fill="#f6f6f6" stroke="#ccc" strokeWidth="2" /><path d="M7 11H21V19H7Z" fill={B1} stroke={B3} strokeWidth="2" /></Ico>
        </DialogRow>
        <DialogRow label="New Component" w={161}><div className="-mt-0.5 ml-[26px]"><Check /></div></DialogRow>
        <DialogRow label="Keep Tools" w={107}><div className="-mt-0.5 ml-[80px]"><Check /></div></DialogRow>
      </div>
      <div className="flex h-[70px] items-center text-[24px]">
        <Ico vb="0 0 24 24" className="ml-[16px]"><circle cx="12" cy="12" r="12" fill="#000" /><rect x="9.500" y="4" width="5" height="4" fill="#fff" /><path d="M8 10H14.500V17H16.500V19.500H8V17H10V12.500H8Z" fill="#fff" /></Ico>
        <div className="ml-[174px] flex h-[38px] w-[120px] items-center justify-center border-2 border-[#9a9a9a] bg-linear-to-b from-[#6698c8] to-[#37679c] pt-px text-white"><Fit w={34}>OK</Fit></div>
        <div className="ml-5 flex h-[38px] w-[120px] items-center justify-center border-2 border-[#b4b4b4] bg-[#ebebeb] pr-px pt-px text-[#666]"><Fit w={77}>Cancel</Fit></div>
      </div>
    </div>
  );
}

/* ---------- view cube ---------- */
function ViewCube() {
  return (
    <svg className="absolute left-[2400px] top-[36px]" width="140" height="120" viewBox="2400 310 140 120">
      <defs>
        <radialGradient id="sh"><stop offset="0" stopColor="#777" /><stop offset="1" stopColor="#fff" stopOpacity="0" /></radialGradient>
        <linearGradient id="vc" x2="0" y2="1"><stop offset="0" stopColor="#f1f1f1" /><stop offset="1" stopColor="#d4d5d6" /></linearGradient>
      </defs>
      <ellipse cx="2464" cy="416" rx="62" ry="7" fill="url(#sh)" />
      <path d="M2425 332H2501V411H2423Z" fill="url(#vc)" stroke="#a6a6a6" strokeWidth="1.600" strokeDasharray="12 4" />
      <rect x="2438" y="347" width="49" height="49" fill="#dcdee1" />
      <text x="2438" y="379" fontSize="21" fontWeight="700" textLength="49" lengthAdjust="spacingAndGlyphs" fill="#9a9da1" fontFamily="Open Sans, sans-serif">RIGHT</text>
      <text x="2429" y="332" fontSize="21" fontWeight="700" fill="#a9a4f8" stroke="#a9a4f8" strokeWidth=".6" fontFamily="Liberation Sans, sans-serif">Z</text>
      <text x="2411" y="420" fontSize="20" fontWeight="700" fill="#f99" stroke="#f99" strokeWidth=".6" fontFamily="Liberation Sans, sans-serif">X</text>
      <text x="2512" y="415" fontSize="20" fontWeight="700" fill="#a5f7a5" stroke="#a5f7a5" strokeWidth=".6" fontFamily="Liberation Sans, sans-serif">Y</text>
      <path d="M2501 408H2512" stroke="#8ff08f" strokeWidth="4" />
      <path d="M2420 412H2430" stroke="#f88" strokeWidth="3" />
    </svg>
  );
}

/* ---------- navigation bar ---------- */
function NavBar() {
  const n = '#3b3f48';
  return (
    <div className="absolute left-[1042px] top-[1006px] flex h-12 w-[474px] items-center bg-[#f1f1f1] pl-[5px]">
      <Ico vb="0 0 32 32">
        <path d="M14 8H18V31H14ZM16 0L20 6H12Z" fill="#fff" stroke={n} strokeWidth="1.800" />
        <path d="M2 14Q16 9 28 14Q33 18 24 21Q15 24 6 22" fill="none" stroke={n} strokeWidth="2.400" /><path d="M4 22L11 17V27Z" fill="#111" />
      </Ico>
      <Caret className="ml-[11px]" />
      <Ico vb="0 0 32 32" className="ml-[11px]">
        <path d="M3 10L8 5L11 8L16 3L19 6L24 3V10Z" fill="#ccc" stroke="#70747c" strokeWidth="1.400" /><rect x="1" y="11" width="30" height="20" fill="#fff" stroke={n} strokeWidth="2" /><rect x="7" y="17" width="17" height="8" fill="#b5b9c0" stroke={n} strokeWidth="2" />
      </Ico>
      <Ico vb="0 0 32 32" className="ml-5">
        <path d="M9 31L7 25L1 17Q2 14 5 16L9 20L5 6Q7 4 9 7L12 15L12 2Q14 0 16 2L17 14L20 3Q22 2 23 4L22 15L27 8Q30 8 30 11L26 21L23 28V31Z" fill="#f8f8fa" stroke={n} strokeWidth="1.800" strokeLinejoin="round" />
      </Ico>
      <Ico vb="0 0 32 32" className="ml-5">
        <path d="M16 19L24 28" stroke={n} strokeWidth="4.500" /><circle cx="10" cy="12" r="8.500" fill="#dcebf0" stroke="#5b6068" strokeWidth="2" /><path d="M22 5H32M27 0V10M22 13H32" stroke={n} strokeWidth="1.800" />
      </Ico>
      <Ico vb="0 0 32 32" className="ml-5">
        <path d="M21 20L30 30" stroke="#444" strokeWidth="5" /><circle cx="13" cy="13" r="11.500" fill="#cfe2e2" stroke="#5b6068" strokeWidth="2.200" /><rect x="8" y="8" width="11" height="11" fill="#fff" stroke={n} strokeWidth="2" />
      </Ico>
      <Caret className="ml-[9px]" />
      <Ico vb="0 0 32 32" className="ml-[11px]">
        <path d="M1 1H31V25H1Z" fill="#f5f5f5" stroke="#555" strokeWidth="2" /><rect x="5" y="4" width="22" height="17" fill="#9dbce0" stroke="#24395e" strokeWidth="2" /><path d="M10 26V31H22V26" fill="#fff" stroke="#555" strokeWidth="2" />
      </Ico>
      <Caret className="ml-1" />
      <Ico vb="0 0 32 32" className="ml-[13px]">
        <rect x="1" y="1" width="30" height="30" fill="#e4e6ea" stroke="#444" strokeWidth="2" /><path d="M6 1V31M11 1V31M16 1V31M21 1V31M26 1V31M1 7H31M1 13H31M1 19H31M1 25H31" stroke="#555" strokeWidth="1.400" />
      </Ico>
      <Caret className="ml-1" />
      <Ico vb="0 0 30 26" className="ml-[13px]">
        <rect x="1" y="1" width="28" height="24" rx="1" fill="#a9c2e4" stroke="#1f3a66" strokeWidth="2" /><path d="M15 1V25M1 13H29" stroke="#1f3a66" strokeWidth="2.400" /><path d="M5 5H11V9H5ZM19 5H25V9H19ZM5 17H11V21H5ZM19 17H25V21H19Z" fill="#c3d5ee" stroke="#6e8cb8" strokeWidth="1.500" />
      </Ico>
      <Caret className="ml-[6px]" />
    </div>
  );
}

/* ---------- taskbar ---------- */
function Desk() {
  return (
    <Ico vb="438 1371 106 50">
      <path d="M438 1414L458 1400H532L543 1410Q540 1417 533 1419H438Z" fill="#c9a27c" /><path d="M438 1415H540Q537 1420 528 1420H438Z" fill="#8a6848" />
      <circle cx="460" cy="1382" r="10" fill="#f2f0fa" stroke="#9a8fc0" strokeWidth="2.500" /><path d="M460 1375V1383L465 1382" fill="none" stroke="#222" strokeWidth="1.600" />
      <path d="M476 1372H515V1401H476Z" fill="#3d4f8c" /><path d="M479 1374H512V1399H479Z" fill="#4db8f5" /><path d="M484 1375H506V1399H484Z" fill="#b9e4ff" /><path d="M487 1381H503M487 1384H503M487 1387H503M487 1390H503" stroke="#2a78c8" strokeWidth="1.200" />
      <path d="M476 1401H515L518 1413H472Z" fill="#a9a2cc" /><path d="M479 1403H512L513 1407H477Z" fill="#65608c" /><rect x="488" y="1409" width="16" height="3" fill="#7b76a5" />
      <path d="M523 1390L521 1379M529 1390V1378M533 1390L536 1380" stroke="#c89030" strokeWidth="3" /><path d="M521 1381L523 1390" stroke="#2a8a4a" strokeWidth="3" /><path d="M536 1381L533 1390" stroke="#4488cc" strokeWidth="3" />
      <path d="M519 1390H534L532 1406H522Z" fill="#e0323a" />
    </Ico>
  );
}
function TaskIcon({ w, dot, className = '', children }: { w: string; dot?: boolean; className?: string; children: ReactNode }) {
  return (
    <div className={'relative flex h-full shrink-0 items-center justify-center ' + w + ' ' + className}>
      {children}
      {dot && <div className="absolute bottom-2 left-1/2 h-1.5 w-3 -translate-x-1/2 rounded-full bg-[#9a9a9a]" />}
    </div>
  );
}
function Taskbar() {
  return (
    <div className={SEGOE + ' flex h-24 shrink-0 items-center border-t-2 border-[#444] bg-[#202223] pb-0.5 leading-none text-white'}>
      <Ico vb="0 0 46 46" className="ml-[41px]">
        <defs><linearGradient id="win" x2="1" y2="1"><stop offset="0" stopColor="#7fdcff" /><stop offset="1" stopColor="#0f95f7" /></linearGradient></defs>
        <path d="M0 2Q0 0 2 0H22V22H0ZM24 0H44Q46 0 46 2V22H24ZM0 24H22V46H2Q0 46 0 44ZM24 24H46V44Q46 46 44 46H24Z" fill="url(#win)" />
      </Ico>
      <div className="ml-[27px] flex h-16 w-[439px] shrink-0 items-center rounded-full border border-[#434444] bg-[#3a3b3b] pl-[22px]">
        <Ico vb="0 0 30 32"><circle cx="13" cy="13" r="11.500" fill="#4c4d4d" stroke="#f2f2f2" strokeWidth="2.600" /><path d="M21 21L28.500 30" stroke="#f2f2f2" strokeWidth="3.400" strokeLinecap="round" /></Ico>
        <Fit w={82} className="ml-[21px] text-[27px] text-[#cfcfcf]">Search</Fit>
        <div className="ml-auto mr-[8px] mt-[6px]"><Desk /></div>
      </div>
      <TaskIcon w="w-[48px]" className="ml-[25px]">
        <Ico vb="0 0 48 44"><rect x="12" y="0" width="36" height="32" rx="1" fill="#f2f2f2" /><rect x="0" y="12" width="36" height="32" rx="1" fill="#767676" opacity=".85" /><path d="M12 12H36V32H12Z" fill="#b2b2b2" /></Ico>
      </TaskIcon>
      <TaskIcon w="w-[48px]" className="ml-[39px]">
        <Ico vb="0 0 48 48">
          <defs>
            <linearGradient id="e1" x2="1"><stop offset="0" stopColor="#2fb0f0" /><stop offset=".6" stopColor="#35c9b8" /><stop offset="1" stopColor="#6be04c" /></linearGradient>
            <linearGradient id="e2" x2=".6" y2="1"><stop offset="0" stopColor="#1468c0" /><stop offset="1" stopColor="#0f80dc" /></linearGradient>
          </defs>
          <path d="M0 22C2 8 12 0 24 0C38 0 48 10 48 21C48 28 43 32 36 32C30 32 27 30 28 28C32 22 28 14 18 14C8 14 1 18 0 24Z" fill="url(#e1)" />
          <path d="M0 24C1 15 9 11 17 12C26 13 31 20 27 27C26 23 18 24 18 31C18 38 28 41 45 36C40 44 32 48 24 48C10 48 0 37 0 24Z" fill="url(#e2)" />
          <path d="M20 21C14 24 12 30 14 36C16 43 22 48 28 47.500C36 47 42 42 45 36C36 41 22 40 19 30C18 26 19 23 20 21Z" fill="#0f4f9a" />
          <path d="M20 20Q26 18 28 23Q29 26 27 28Q27 31 31 32Q24 33 21 29Q18 24 20 20Z" fill="#202223" />
        </Ico>
      </TaskIcon>
      <TaskIcon w="w-[48px]" className="ml-[41px]" dot>
        <Ico vb="0 0 48 44"><path d="M0 2Q0 0 2 0H16L20 4L18 8H0Z" fill="#e3a008" /><path d="M0 8H16L20 4H46Q48 4 48 6V44H0Z" fill="#ffca3a" /><path d="M8 44V34Q8 29 13 29H35Q40 29 40 34V44Z" fill="#0f6ec0" /><path d="M14 36H34" stroke="#084a88" strokeWidth="2.400" /></Ico>
      </TaskIcon>
      <TaskIcon w="w-[46px]" className="ml-[41px]">
        <Ico vb="0 0 46 48">
          <path d="M0 8Q0 7 1 7H45Q46 7 46 8V41Q46 48 39 48H7Q0 48 0 41Z" fill="#f4f4f4" /><path d="M11 11V5Q11 2 14 2H32Q35 2 35 5V11" fill="none" stroke="#1fb0f0" strokeWidth="4" />
          <rect x="13" y="17" width="9" height="9" fill="#f25022" /><rect x="24" y="17" width="9" height="9" fill="#7fba00" /><rect x="13" y="28" width="9" height="9" fill="#00a4ef" /><rect x="24" y="28" width="9" height="9" fill="#ffb900" />
        </Ico>
      </TaskIcon>
      <TaskIcon w="w-[40px]" className="ml-[45px]">
        <Ico vb="0 0 40 44">
          <defs>
            <linearGradient id="m1" y2="1" x2="0"><stop offset="0" stopColor="#a878e0" /><stop offset="1" stopColor="#1f7fe0" /></linearGradient>
            <linearGradient id="m2" x2="1" y2="1"><stop offset="0" stopColor="#2a60c8" /><stop offset="1" stopColor="#4fd8ff" /></linearGradient>
            <linearGradient id="m3" x2="1"><stop offset="0" stopColor="#c490f8" /><stop offset="1" stopColor="#7848a8" /></linearGradient>
          </defs>
          <path d="M20 0L4 9Q0 11 0 16V29Q0 34 4 36L12 31Q12 22 14 15L26 10V4Z" fill="url(#m1)" />
          <path d="M14 0H24L37 8Q40 11 40 15V28Q34 18 26 16L13 15Z" fill="url(#m2)" />
          <path d="M26 16Q40 22 40 28Q40 34 36 36L24 43Q20 45 16 43L6 37Q12 36 20 30Z" fill="url(#m3)" /><circle cx="20" cy="22" r="7.500" fill="#202223" />
        </Ico>
      </TaskIcon>
      <TaskIcon w="w-[48px]" className="ml-[43px]" dot>
        <Ico vb="0 0 48 43">
          <rect x="11" y="0" width="36" height="42" rx="1" fill="#185c37" /><path d="M11 0H29V11H11Z" fill="#21a366" /><path d="M29 0H47V11H29Z" fill="#33c481" /><path d="M29 11H47V21H29Z" fill="#21a366" /><path d="M11 11H29V32H11Z" fill="#107c41" /><path d="M29 21H47V32H29Z" fill="#107c41" />
          <rect x="0" y="9" width="24" height="24" rx="2" fill="#0f7a40" /><path d="M8 15L16 27M16 15L8 27" stroke="#fff" strokeWidth="3" />
        </Ico>
      </TaskIcon>
      <TaskIcon w="w-[48px]" className="ml-[40px]" dot>
        <Ico vb="0 0 48 48">
          <circle cx="24" cy="24" r="24" fill="#2a9a48" /><path d="M3.200 12A24 24 0 0 1 44.800 12H24L14 30Z" fill="#ea4335" /><path d="M44.800 12A24 24 0 0 1 24 48L34.400 30L30 12Z" fill="#fbbc14" />
          <circle cx="24" cy="24" r="12" fill="#fff" /><circle cx="24" cy="24" r="9.500" fill="#2a74ea" />
        </Ico>
      </TaskIcon>
      <TaskIcon w="w-[44px]" className="ml-[42px]" dot>
        <Ico vb="0 0 44 44"><circle cx="22" cy="22" r="22" fill="#1ed760" /><path d="M9 15Q24 10 36 18M10 22Q23 18 33 25M11 29Q22 26 30 31" fill="none" stroke="#14261a" strokeWidth="4" strokeLinecap="round" /></Ico>
      </TaskIcon>
      <div className="relative ml-[27px] flex h-20 w-[79px] shrink-0 items-center justify-center rounded-md border border-[#3c3d3e] bg-[#2c2e2f]">
        <FusionLogo w={45} h={48} />
        <div className="absolute bottom-[1px] left-[23px] h-1.5 w-8 rounded-full bg-[#4cc2ff]" />
      </div>
      <Ico vb="0 0 22 13" className="ml-auto"><path d="M1 12L11 2L21 12" fill="none" stroke="#fff" strokeWidth="2.400" /></Ico>
      <Ico vb="0 0 32 23" className="ml-[37px]"><path d="M5 19Q-1 17 1 11Q3 6 8 7Q11 0 17 0Q24 1 26 7Q32 10 31 15Z" fill="#a5a5a5" /><path d="M1 18Q1 13 8 14Q13 9 19 11Q31 6 32 17Q31 23 26 23H6Q1 23 1 18Z" fill="#fff" /></Ico>
      <Fit w={31} className="ml-[45px] mt-0.5 text-[24px]">ISL</Fit>
      <Ico vb="0 0 32 23" className="ml-[44px]"><path d="M1 9Q16 -6 31 9M6 13Q16 3 26 13M11 17Q16 12 21 17" fill="none" stroke="#fff" strokeWidth="2.200" strokeLinecap="round" /><circle cx="16" cy="20" r="2.600" fill="#fff" /></Ico>
      <Ico vb="0 0 32 28" className="ml-4"><path d="M1 10H6L13 4V24L6 18H1Z" fill="none" stroke="#fff" strokeWidth="2" strokeLinejoin="round" /><path d="M17 10Q19 14 17 18M21 6Q26 14 21 22M25 2Q34 14 25 26" fill="none" stroke="#fff" strokeWidth="2" strokeLinecap="round" /></Ico>
      <Ico vb="0 0 32 26" className="-mt-1.5 ml-[16px]"><path d="M11 6H25Q28 6 28 9V22Q28 25 25 25H4Q1 25 1 22V16" fill="none" stroke="#fff" strokeWidth="2.200" /><path d="M28 12H32V19H28ZM13 9H25V22H4V19Z" fill="#fff" /><path d="M6 0L0 11H4L2 20L10 8H6Z" fill="#fff" /></Ico>
      <div className="-mt-0.5 ml-[33px] flex w-[124px] shrink-0 flex-col items-end gap-[8px] text-[24px]">
        <Fit w={58}>14:47</Fit>
        <Fit w={123}>20/04/2023</Fit>
      </div>
      <div className="ml-[12px] mr-[36px] flex h-8 w-[39px] shrink-0 items-center justify-center rounded-full bg-[#4cc2ff] pb-0.5 text-[20px] text-black"><Fit w={22}>20</Fit></div>
    </div>
  );
}

export default function App() {
  return (
    <div className="flex h-[1440px] w-[2560px] flex-col overflow-hidden bg-[#f1f1f1]">
      <TitleBar />
      <TabBar />
      <Ribbon />
      <div className="relative h-[1062px] w-[2560px] shrink-0 overflow-hidden border-t-4 border-[#f1f1f1] bg-white">
        <div className="absolute inset-x-0 -top-1 h-[1062px]">
          <Model />
          <ViewCube />
          <Browser />
          <CombineDialog />
          <div className={SEGOE + ' absolute left-2 top-[1004px] flex h-[50px] w-[600px] items-center border-2 border-t-0 border-[#c8c8c8] bg-[#f1f1f1] text-[22px] leading-none text-[#666]'}>
            <Fit w={115} className="-mt-0.5 ml-12">COMMENTS</Fit>
            <div className="ml-auto"><Dot plus /></div>
            <Handles className="ml-[14px] mr-[1px]" />
          </div>
          <NavBar />
          <div className='absolute right-[33px] top-[1019px] font-["Liberation_Sans",Arial,sans-serif] text-[21.33px] font-bold leading-[24px] text-[#333]'>
            <Fit w={93}>2 Bodies</Fit>
          </div>
        </div>
      </div>
      <div className="h-2 shrink-0 bg-[#f2f2f2]" />
      <Taskbar />
    </div>
  );
}
